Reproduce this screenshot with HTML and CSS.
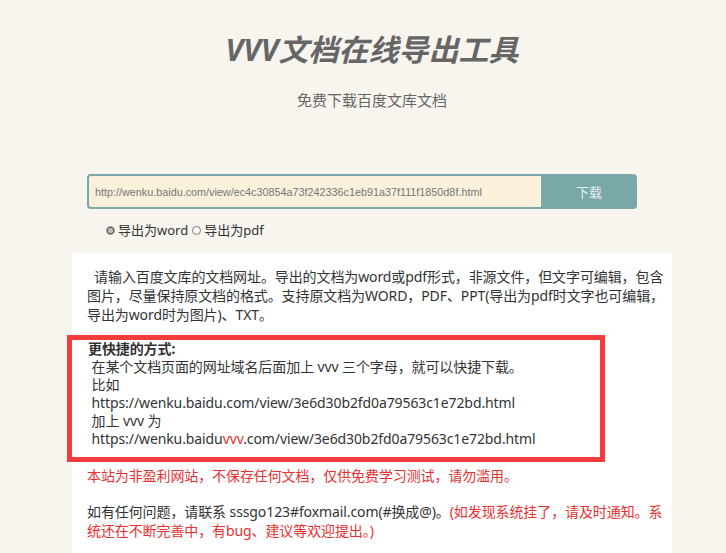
FILE: index.html
```html
<!DOCTYPE html>
<html lang="zh-CN">
<head>
  <meta charset="UTF-8">
  <title>VVV文档在线导出工具</title>
  <link rel="stylesheet" href="styles.css">
</head>
<body>
  <div class="page">
    <h1 class="title">VVV文档在线导出工具</h1>
    <p class="subtitle">免费下载百度文库文档</p>

    <form class="search">
      <input class="url" type="text" value="http://wenku.baidu.com/view/ec4c30854a73f242336c1eb91a37f111f1850d8f.html">
      <button class="go" type="button">下载</button>
    </form>

    <div class="types">
      <label><input type="radio" name="type" checked>导出为word</label>
      <label><input type="radio" name="type">导出为pdf</label>
    </div>

    <div class="card">
      <p class="intro">&nbsp;&nbsp;请输入百度文库的文档网址。导出的文档为word或pdf形式，非源文件，但文字可编辑，包含图片，尽量保持原文档的格式。支持原文档为WORD，PDF、PPT(导出为pdf时文字也可编辑，导出为word时为图片)、TXT。</p>

      <div class="tip">
        <b>更快捷的方式:</b><br>
        &nbsp;在某个文档页面的网址域名后面加上 vvv 三个字母，就可以快捷下载。<br>
        &nbsp;比如<br>
        &nbsp;https://wenku.baidu.com/view/3e6d30b2fd0a79563c1e72bd.html<br>
        &nbsp;加上 vvv 为<br>
        &nbsp;https://wenku.baidu<span class="red">vvv</span>.com/view/3e6d30b2fd0a79563c1e72bd.html
      </div>

      <p class="red">本站为非盈利网站，不保存任何文档，仅供免费学习测试，请勿滥用。</p>
      <p class="contact">如有任何问题，请联系 sssgo123#foxmail.com(#换成@)。<span class="red">(如发现系统挂了，请及时通知。系统还在不断完善中，有bug、建议等欢迎提出。)</span></p>
    </div>
  </div>
</body>
</html>
```

FILE: styles.css
```css
body {
  margin: 0;
  background: #f8f5ef;
  color: #333;
  font-family: "Noto Sans", "Noto Sans CJK SC", sans-serif;
}

.page {
  width: 600px;
  margin: 0 auto;
  padding-top: 28px;
  position: relative;
  left: 9px;
}

.title {
  margin: 0;
  font-size: 30px;
  line-height: 44px;
  font-style: italic;
  font-weight: bold;
  color: #666;
  text-align: center;
}

.subtitle {
  margin: 18px 0 0;
  font-size: 15px;
  line-height: 20px;
  color: #666;
  text-align: center;
}

.search {
  display: flex;
  margin: 64px 0 0 15px;
  width: 550px;
}

.url {
  flex: 1;
  height: 35px;
  box-sizing: border-box;
  border: 2px solid #79a8a9;
  border-right: none;
  border-radius: 4px 0 0 4px;
  background: #faf0db;
  padding: 0 6px;
  font-family: "Liberation Sans", Arial, sans-serif;
  font-size: 10.8px;
  color: #777;
  outline: none;
}

.go {
  width: 96px;
  height: 35px;
  border: none;
  border-radius: 0 4px 4px 0;
  background: #79a8a9;
  color: #e8f0f0;
  font-family: "Noto Sans CJK SC", sans-serif;
  font-size: 13px;
}

.types {
  display: flex;
  gap: 4px;
  margin: 12px 0 0 34px;
  font-size: 13px;
  line-height: 18px;
}

.types label {
  display: flex;
  align-items: center;
}

.types input {
  width: 9px;
  height: 9px;
  margin: 0 3px 0 0;
  accent-color: #bbb;
}

.card {
  margin-top: 14px;
  background: #fff;
  padding: 14px 8px 12px 15px;
  font-size: 14px;
  line-height: 19px;
  letter-spacing: -0.1px;
  min-height: 274px;
}

.card p {
  margin: 0;
}

.intro {
  margin-bottom: 11px !important;
}

.tip {
  margin-left: -20px;
  width: 538px;
  box-sizing: border-box;
  border: 5px solid #f43c3c;
  padding: 0 0 9px 16px;
  line-height: 18px;
}

.tip b {
  font-weight: bold;
}

.red {
  color: #e83030;
}

.card > .red {
  margin-top: 4px;
}

.contact {
  margin-top: 17px !important;
}
```
